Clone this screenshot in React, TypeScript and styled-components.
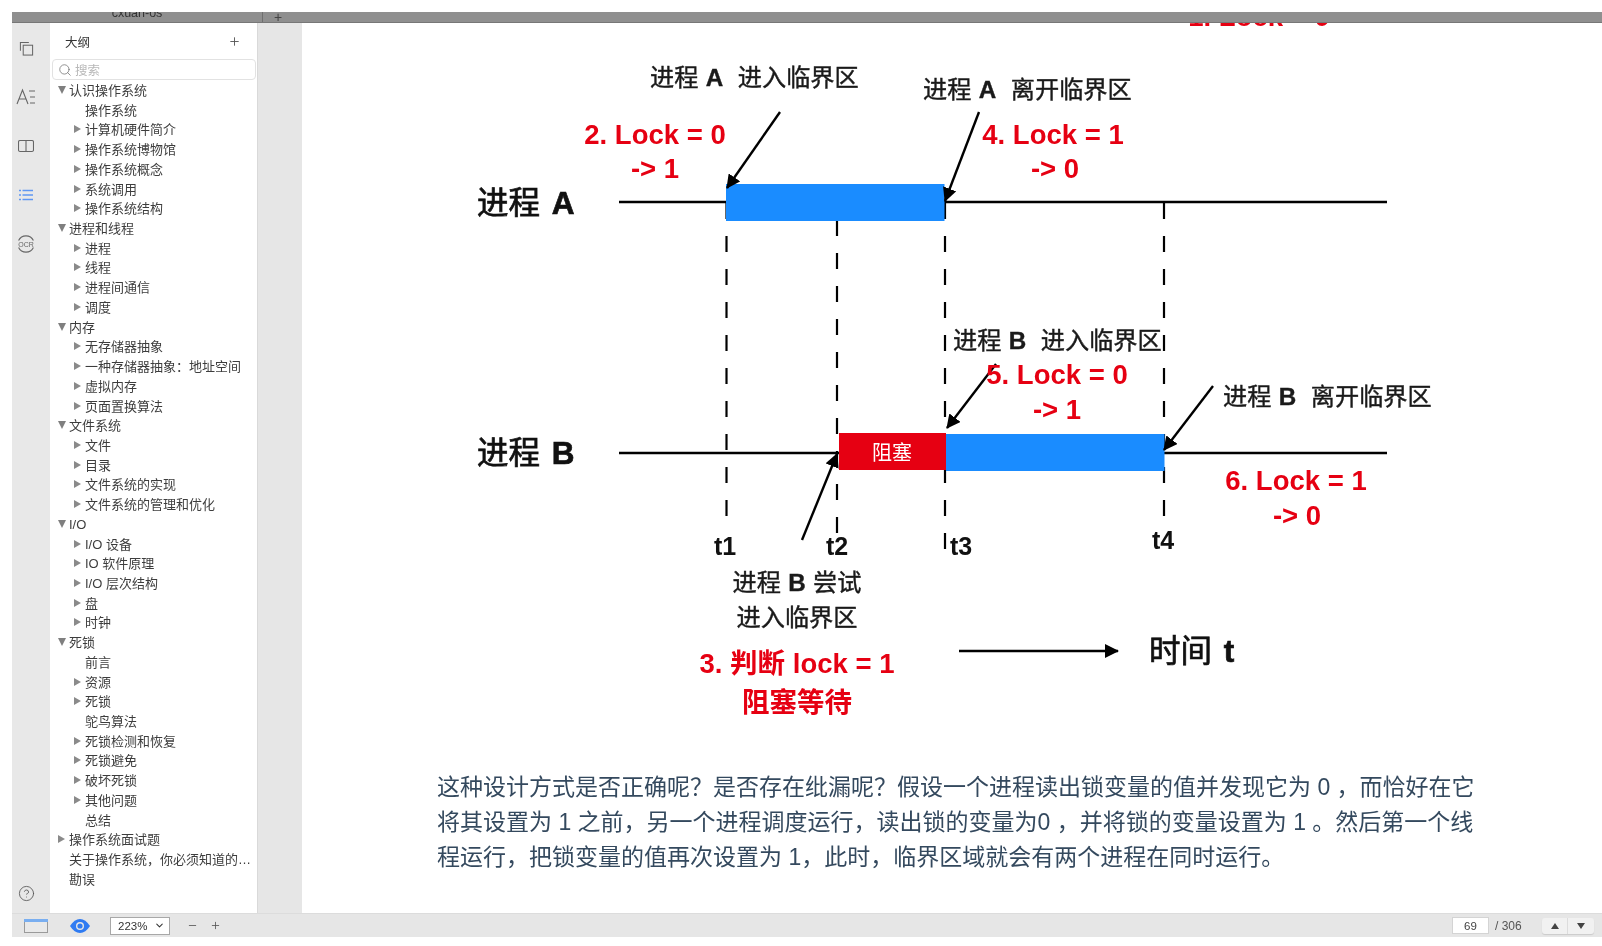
import React from 'react';
import styled, { createGlobalStyle } from 'styled-components';
import { CircleHelp, Plus, Minus, Search, ChevronDown } from 'lucide-react';

type TreeRow = { label: string; level: 0 | 1; arrow?: 'open' | 'closed' };

const outline: TreeRow[] = [
  { label: '认识操作系统', level: 0, arrow: 'open' },
  { label: '操作系统', level: 1 },
  { label: '计算机硬件简介', level: 1, arrow: 'closed' },
  { label: '操作系统博物馆', level: 1, arrow: 'closed' },
  { label: '操作系统概念', level: 1, arrow: 'closed' },
  { label: '系统调用', level: 1, arrow: 'closed' },
  { label: '操作系统结构', level: 1, arrow: 'closed' },
  { label: '进程和线程', level: 0, arrow: 'open' },
  { label: '进程', level: 1, arrow: 'closed' },
  { label: '线程', level: 1, arrow: 'closed' },
  { label: '进程间通信', level: 1, arrow: 'closed' },
  { label: '调度', level: 1, arrow: 'closed' },
  { label: '内存', level: 0, arrow: 'open' },
  { label: '无存储器抽象', level: 1, arrow: 'closed' },
  { label: '一种存储器抽象\uFF1A地址空间', level: 1, arrow: 'closed' },
  { label: '虚拟内存', level: 1, arrow: 'closed' },
  { label: '页面置换算法', level: 1, arrow: 'closed' },
  { label: '文件系统', level: 0, arrow: 'open' },
  { label: '文件', level: 1, arrow: 'closed' },
  { label: '目录', level: 1, arrow: 'closed' },
  { label: '文件系统的实现', level: 1, arrow: 'closed' },
  { label: '文件系统的管理和优化', level: 1, arrow: 'closed' },
  { label: 'I/O', level: 0, arrow: 'open' },
  { label: 'I/O 设备', level: 1, arrow: 'closed' },
  { label: 'IO 软件原理', level: 1, arrow: 'closed' },
  { label: 'I/O 层次结构', level: 1, arrow: 'closed' },
  { label: '盘', level: 1, arrow: 'closed' },
  { label: '时钟', level: 1, arrow: 'closed' },
  { label: '死锁', level: 0, arrow: 'open' },
  { label: '前言', level: 1 },
  { label: '资源', level: 1, arrow: 'closed' },
  { label: '死锁', level: 1, arrow: 'closed' },
  { label: '鸵鸟算法', level: 1 },
  { label: '死锁检测和恢复', level: 1, arrow: 'closed' },
  { label: '死锁避免', level: 1, arrow: 'closed' },
  { label: '破坏死锁', level: 1, arrow: 'closed' },
  { label: '其他问题', level: 1, arrow: 'closed' },
  { label: '总结', level: 1 },
  { label: '操作系统面试题', level: 0, arrow: 'closed' },
  { label: '关于操作系统\uFF0C你必须知道的…', level: 0 },
  { label: '勘误', level: 0 },
];

const paragraphLines = [
  '这种设计方式是否正确呢\uFF1F是否存在纰漏呢\uFF1F假设一个进程读出锁变量的值并发现它为 0 \uFF0C而恰好在它',
  '将其设置为 1 之前\uFF0C另一个进程调度运行\uFF0C读出锁的变量为0 \uFF0C并将锁的变量设置为 1 。然后第一个线',
  '程运行\uFF0C把锁变量的值再次设置为 1\uFF0C此时\uFF0C临界区域就会有两个进程在同时运行。',
];

// y start of each dashed guide, period 33
const dashStarts = (first: number, last: number) => {
  const out: number[] = [];
  for (let y = first; y <= last; y += 33) out.push(y);
  return out;
};

const guides = [
  { x: 726.5, ys: dashStarts(203, 500) },
  { x: 837, ys: dashStarts(220, 517) },
  { x: 945, ys: dashStarts(203, 533) },
  { x: 1164, ys: dashStarts(203, 500) },
];

const arrows = [
  { x1: 780, y1: 112, x2: 727, y2: 188 },
  { x1: 979, y1: 112, x2: 945, y2: 201 },
  { x1: 996, y1: 364, x2: 947, y2: 428 },
  { x1: 1213, y1: 386, x2: 1164, y2: 450 },
  { x1: 802, y1: 540, x2: 837, y2: 454 },
  { x1: 959, y1: 651, x2: 1118, y2: 651 },
];

function App() {
  return (
    <>
      <GlobalStyle />
      <Page>
        <TopBar>
          <TabTitle>cxuan-os</TabTitle>
          <NewTab>+</NewTab>
        </TopBar>
        <Main>
          <Rail>
            <RailIcon>
              <svg width="15" height="15" viewBox="0 0 16 16" fill="none" stroke="#666" strokeWidth="1.1">
                <path d="M1.500 10.500V1.500h9" />
                <rect x="4.500" y="4.500" width="10" height="10.500" />
              </svg>
            </RailIcon>
            <RailIcon>
              <svg width="20" height="18" viewBox="0 0 20 18" fill="none" stroke="#666" strokeWidth="1.1">
                <path d="M1 16 6.500 2l5.500 14M3 11h7" />
                <path d="M13 3h6M14 9h5M14 15h5" />
              </svg>
            </RailIcon>
            <RailIcon>
              <svg width="16" height="14" viewBox="0 0 16 14" fill="none" stroke="#666" strokeWidth="1.1">
                <rect x="0.500" y="1.500" width="15" height="11" rx="1.500" />
                <path d="M8 1.500v11" />
              </svg>
            </RailIcon>
            <RailIcon>
              <svg width="14" height="12" viewBox="0 0 14 12" fill="none" stroke="#5f97f2" strokeWidth="1.500">
                <path d="M0 1.500h2M3.500 1.500H14M0 6h2M3.500 6H14M0 10.500h2M3.500 10.500H14" />
              </svg>
            </RailIcon>
            <RailIcon>
              <svg width="20" height="20" viewBox="0 0 20 20" fill="none" stroke="#666" strokeWidth="1.100">
                <path d="M2.600 6.500a8.200 8.200 0 0 1 14.800 0M2.600 13.500a8.200 8.200 0 0 0 14.800 0" />
                <OcrText x="10" y="12.600" textAnchor="middle">OCR</OcrText>
              </svg>
            </RailIcon>
            <HelpSlot>
              <CircleHelp size={17} strokeWidth={1.2} color="#555" />
            </HelpSlot>
          </Rail>
          <Panel>
            <PanelHead>
              <span>大纲</span>
              <Plus size={13} strokeWidth={1.7} color="#555" />
            </PanelHead>
            <SearchBox>
              <Search size={14} strokeWidth={1.2} color="#666" />
              <span>搜索</span>
            </SearchBox>
            <Tree>
              {outline.map((row, i) => (
                <Row key={i} $level={row.level}>
                  {row.arrow && <Caret $open={row.arrow === 'open'} $level={row.level} />}
                  {row.label}
                </Row>
              ))}
            </Tree>
          </Panel>
          <Gutter />
          <Content>
            <Diagram viewBox="302 23 1300 735" width="1300" height="735">
              <defs>
                <marker id="head" viewBox="0 0 14 14" refX="13" refY="7" markerWidth="14" markerHeight="14" markerUnits="userSpaceOnUse" orient="auto">
                  <path d="M0 0 14 7 0 14Z" fill="#000" />
                </marker>
              </defs>

              <line x1="619" y1="202" x2="1387" y2="202" stroke="#000" strokeWidth="2.400" />
              <line x1="619" y1="453" x2="1387" y2="453" stroke="#000" strokeWidth="2.400" />

              {guides.map(g =>
                g.ys.map(y => (
                  <line key={`${g.x}-${y}`} x1={g.x} y1={y} x2={g.x} y2={y + 16} stroke="#000" strokeWidth="2.200" />
                ))
              )}

              <rect x="726" y="184" width="218.500" height="37" fill="#1a8cff" />
              <rect x="839" y="433" width="107" height="37" fill="#e60012" />
              <rect x="946" y="434" width="218.500" height="37" fill="#1a8cff" />

              {arrows.map((a, i) => (
                <line key={i} {...a} stroke="#000" strokeWidth="2.400" markerEnd="url(#head)" />
              ))}

              <ProcessName x="477" y="203">进程 <Latin>A</Latin></ProcessName>
              <ProcessName x="477" y="453">进程 <Latin>B</Latin></ProcessName>

              <Caption x="650" y="77">进程 <Latin>A</Latin>  进入临界区</Caption>
              <Caption x="923" y="89">进程 <Latin>A</Latin>  离开临界区</Caption>
              <Caption x="953" y="340">进程 <Latin>B</Latin>  进入临界区</Caption>
              <Caption x="1223" y="396">进程 <Latin>B</Latin>  离开临界区</Caption>
              <Caption x="797" y="582" textAnchor="middle">进程 <Latin>B</Latin> 尝试</Caption>
              <Caption x="797" y="617" textAnchor="middle">进入临界区</Caption>

              <RedNote x="1259" y="16" textAnchor="middle">1. Lock = 0</RedNote>
              <RedNote x="655" y="134" textAnchor="middle">2. Lock = 0</RedNote>
              <RedNote x="655" y="168" textAnchor="middle">-&gt; 1</RedNote>
              <RedNote x="1053" y="134" textAnchor="middle">4. Lock = 1</RedNote>
              <RedNote x="1055" y="168" textAnchor="middle">-&gt; 0</RedNote>
              <RedNote x="1057" y="374" textAnchor="middle">5. Lock = 0</RedNote>
              <RedNote x="1057" y="409" textAnchor="middle">-&gt; 1</RedNote>
              <RedNote x="1296" y="480" textAnchor="middle">6. Lock = 1</RedNote>
              <RedNote x="1297" y="515" textAnchor="middle">-&gt; 0</RedNote>
              <RedNote x="797" y="663" textAnchor="middle">3. 判断 lock = 1</RedNote>
              <RedNote x="797" y="702" textAnchor="middle">阻塞等待</RedNote>

              <TimeTick x="725" y="546" textAnchor="middle">t1</TimeTick>
              <TimeTick x="837" y="546" textAnchor="middle">t2</TimeTick>
              <TimeTick x="961" y="546" textAnchor="middle">t3</TimeTick>
              <TimeTick x="1163" y="540" textAnchor="middle">t4</TimeTick>

              <BlockedText x="892" y="453">阻塞</BlockedText>
              <ProcessName x="1149" y="651">时间 <Latin>t</Latin></ProcessName>
            </Diagram>
            <Paragraph>
              {paragraphLines.map(line => (
                <span key={line}>{line}</span>
              ))}
            </Paragraph>
          </Content>
        </Main>
        <BottomBar>
          <BottomLeft>
            <svg width="24" height="14" viewBox="0 0 24 14">
              <rect x="0.500" y="0.500" width="23" height="13" fill="#e9e9e9" stroke="#9a9a9a" />
              <rect x="0" y="0" width="24" height="3" fill="#79aef0" />
            </svg>
            <EyeSlot>
              <svg width="20" height="14" viewBox="0 0 20 14">
                <path d="M0 7c3-4.600 6.200-7 10-7s7 2.400 10 7c-3 4.600-6.200 7-10 7S3 11.600 0 7Z" fill="#2f7bf2" />
                <circle cx="10" cy="7" r="4" fill="#e6e6e6" />
                <circle cx="10" cy="7" r="2.600" fill="#2f7bf2" />
              </svg>
            </EyeSlot>
            <ZoomSelect>
              <span>223%</span>
              <ChevronDown size={11} strokeWidth={2.2} color="#333" />
            </ZoomSelect>
            <ZoomButtons>
              <Minus size={11} strokeWidth={1.8} color="#555" />
              <Plus size={11} strokeWidth={1.8} color="#555" />
            </ZoomButtons>
          </BottomLeft>
          <BottomRight>
            <PageBox>69</PageBox>
            <PageTotal>/ 306</PageTotal>
            <PageNav>
              <NavButton $up />
              <NavButton />
            </PageNav>
          </BottomRight>
        </BottomBar>
      </Page>
    </>
  );
}

const GlobalStyle = createGlobalStyle`
  html, body {
    margin: 0;
    padding: 0;
    background: #fff;
  }
  * {
    box-sizing: border-box;
  }
`;

const fontStack = `"Liberation Sans", "Noto Sans CJK SC", sans-serif`;

const Page = styled.div`
  width: 1602px;
  height: 946px;
  padding: 12px 0 9px 12px;
  display: flex;
  flex-direction: column;
  overflow: hidden;
  font-family: ${fontStack};
  background: #fff;
  filter: blur(0.35px);
`;

const TopBar = styled.div`
  height: 11px;
  flex: none;
  display: flex;
  align-items: center;
  overflow: hidden;
  background: #8f8f8f;
  border-bottom: 1px solid #777;
`;

const TabTitle = styled.div`
  width: 251px;
  height: 100%;
  text-align: center;
  font-size: 12.500px;
  line-height: 3px;
  color: #333;
  border-right: 1px solid #6f6f6f;
`;

const NewTab = styled.div`
  margin-left: 11px;
  font-size: 14px;
  line-height: 0;
  color: #444;
`;

const Main = styled.div`
  flex: 1;
  min-height: 0;
  display: flex;
`;

const Rail = styled.div`
  width: 38px;
  flex: none;
  display: flex;
  flex-direction: column;
  align-items: center;
  gap: 29px;
  padding: 15px 10px 0 0;
  background: #e8e8e8;
`;

const RailIcon = styled.div`
  height: 20px;
  display: flex;
  align-items: center;
  justify-content: center;
`;

const OcrText = styled.text`
  font-family: "Liberation Sans", sans-serif;
  font-size: 7px;
  fill: #666;
  stroke: none;
`;

const HelpSlot = styled(RailIcon)`
  margin-top: auto;
  margin-bottom: 10px;
`;

const Panel = styled.div`
  width: 208px;
  flex: none;
  display: flex;
  flex-direction: column;
  background: #fff;
  border-right: 1px solid #d9d9d9;
`;

const PanelHead = styled.div`
  height: 36px;
  flex: none;
  display: flex;
  align-items: center;
  justify-content: space-between;
  padding: 0 16px 0 15px;
  font-size: 12.500px;
  color: #333;
`;

const SearchBox = styled.div`
  height: 21px;
  flex: none;
  margin: 0 1px 0 2px;
  padding-left: 5px;
  display: flex;
  align-items: center;
  gap: 3px;
  font-size: 12.500px;
  color: #b8b8b8;
  background: #fff;
  border: 1px solid #e2e2e2;
  border-radius: 4px;
`;

const Tree = styled.div`
  padding-top: 1px;
  display: flex;
  flex-direction: column;
`;

const Row = styled.div<{ $level: number }>`
  position: relative;
  height: 19.720px;
  line-height: 19.720px;
  padding-left: ${p => (p.$level === 0 ? 19 : 35)}px;
  font-size: 13px;
  color: #3d3d3d;
  white-space: nowrap;
`;

const Caret = styled.span<{ $open: boolean; $level: number }>`
  position: absolute;
  top: 5px;
  left: ${p => (p.$level === 0 ? 8 : 24)}px;
  ${p =>
    p.$open
      ? `border-left: 4.500px solid transparent;
         border-right: 4.500px solid transparent;
         border-top: 8px solid #7f7f7f;`
      : `border-top: 4.500px solid transparent;
         border-bottom: 4.500px solid transparent;
         border-left: 7.500px solid #8a8a8a;`}
`;

const Gutter = styled.div`
  width: 44px;
  flex: none;
  background: #e6e6e6;
`;

const Content = styled.div`
  flex: 1;
  min-width: 0;
  overflow: hidden;
  display: flex;
  flex-direction: column;
  background: #fff;
`;

const Diagram = styled.svg`
  display: block;
  flex: none;
`;

const diagramText = `
  font-family: ${fontStack};
  white-space: pre;
  dominant-baseline: central;
`;

const Latin = styled.tspan`
  font-weight: 700;
`;

const ProcessName = styled.text`
  ${diagramText}
  font-size: 31.500px;
  word-spacing: 3px;
  fill: #111;
  stroke: #111;
  stroke-width: 0.700px;
`;

const Caption = styled.text`
  ${diagramText}
  font-size: 24.200px;
  word-spacing: 0.600px;
  fill: #1a1a1a;
  stroke: #1a1a1a;
  stroke-width: 0.400px;
`;

const RedNote = styled.text`
  ${diagramText}
  font-size: 27.500px;
  font-weight: 700;
  fill: #e60012;
`;

const TimeTick = styled.text`
  ${diagramText}
  font-size: 25px;
  font-weight: 700;
  fill: #111;
`;

const BlockedText = styled.text`
  ${diagramText}
  font-size: 20px;
  text-anchor: middle;
  fill: #fff;
`;

const Paragraph = styled.p`
  margin: 0;
  padding: 12px 0 0 135px;
  font-family: ${fontStack};
  font-size: 23px;
  line-height: 35px;
  color: #34495e;
  white-space: nowrap;

  span {
    display: block;
  }
`;

const BottomBar = styled.div`
  height: 24px;
  flex: none;
  display: flex;
  align-items: center;
  justify-content: space-between;
  background: #e6e6e6;
  border-top: 1px solid #dcdcdc;
`;

const BottomLeft = styled.div`
  display: flex;
  align-items: center;
  padding-left: 12px;
`;

const EyeSlot = styled.div`
  display: flex;
  margin-left: 22px;
`;

const ZoomSelect = styled.div`
  width: 60px;
  height: 18px;
  margin-left: 20px;
  padding: 0 4px 0 7px;
  display: flex;
  align-items: center;
  justify-content: space-between;
  font-size: 11.500px;
  color: #333;
  background: #fff;
  border: 1px solid #a8a8a8;
`;

const ZoomButtons = styled.div`
  margin-left: 17px;
  display: flex;
  gap: 12px;
`;

const BottomRight = styled.div`
  display: flex;
  align-items: center;
  padding-right: 8px;
`;

const PageBox = styled.div`
  width: 37px;
  height: 17px;
  line-height: 16px;
  text-align: center;
  font-size: 11.500px;
  color: #444;
  background: #fff;
  border: 1px solid #d4d4d4;
`;

const PageTotal = styled.div`
  margin-left: 6px;
  width: 47px;
  font-size: 12px;
  color: #555;
`;

const PageNav = styled.div`
  display: flex;
  height: 16px;
  background: #f1f1f1;
  border-radius: 3px;
  box-shadow: 0 1px 1px rgba(0, 0, 0, 0.12);
`;

const NavButton = styled.div<{ $up?: boolean }>`
  width: 26px;
  display: flex;
  align-items: center;
  justify-content: center;
  border-right: ${p => (p.$up ? '1px solid #dcdcdc' : 'none')};

  &::before {
    content: '';
    border-left: 4px solid transparent;
    border-right: 4px solid transparent;
    ${p => (p.$up ? 'border-bottom: 6px solid #444;' : 'border-top: 6px solid #444;')}
  }
`;

export default App;
